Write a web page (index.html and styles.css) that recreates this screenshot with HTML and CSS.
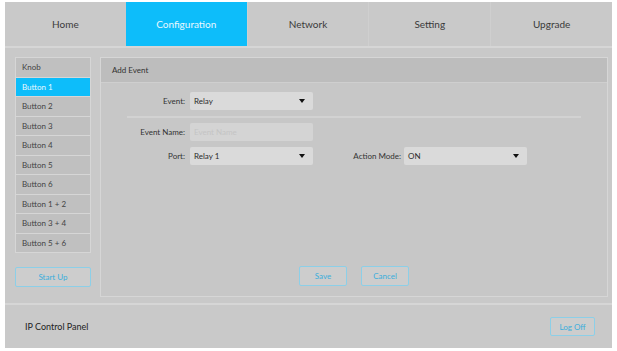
FILE: index.html
```html
<!DOCTYPE html>
<html lang="en">

<head>
    <meta charset="UTF-8">
    <title>IP Control Panel</title>
    <link rel="stylesheet" href="styles.css">
</head>

<body>
    <div class="app">
        <nav class="tabs">
            <a class="tab">Home</a>
            <a class="tab active">Configuration</a>
            <a class="tab">Network</a>
            <a class="tab">Setting</a>
            <a class="tab">Upgrade</a>
        </nav>

        <div class="content">
            <aside class="sidebar">
                <ul class="key-list">
                    <li>Knob</li>
                    <li class="selected">Button 1</li>
                    <li>Button 2</li>
                    <li>Button 3</li>
                    <li>Button 4</li>
                    <li>Button 5</li>
                    <li>Button 6</li>
                    <li>Button 1 + 2</li>
                    <li>Button 3 + 4</li>
                    <li>Button 5 + 6</li>
                </ul>
                <button type="button" class="outline-btn startup-btn">Start Up</button>
            </aside>

            <section class="panel">
                <div class="panel-title">Add Event</div>
                <div class="panel-body">
                    <div class="form-row">
                        <label class="field-label">Event:</label>
                        <div class="select-box"><span>Relay</span><i class="caret"></i></div>
                    </div>
                    <hr class="divider">
                    <div class="form-row">
                        <label class="field-label">Event Name:</label>
                        <div class="text-box">Event Name</div>
                    </div>
                    <div class="form-row">
                        <label class="field-label">Port:</label>
                        <div class="select-box"><span>Relay 1</span><i class="caret"></i></div>
                        <label class="field-label mode-label">Action Mode:</label>
                        <div class="select-box"><span>ON</span><i class="caret"></i></div>
                    </div>

                    <div class="panel-actions">
                        <button type="button" class="outline-btn">Save</button>
                        <button type="button" class="outline-btn">Cancel</button>
                    </div>
                </div>
            </section>
        </div>

        <footer class="footer">
            <span class="footer-title">IP Control Panel</span>
            <button type="button" class="outline-btn logoff-btn">Log Off</button>
        </footer>
    </div>
</body>

</html>
```

FILE: styles.css
```css
:root {
    --bg-color: #c9c9c9;
    --panel-head: #bdbdbd;
    --light-line: #d6d6d6;
    --field-color: #dadada;
    --blue-color: #0dbdfa;
    --btn-text: #3aaedc;
    --btn-border: #8ccfe8;
    --text-color: #333333;
}

body {
    margin: 0;
    background: #ffffff;
    font-family: Lato, "Open Sans", sans-serif;
    color: var(--text-color);
}

.app {
    margin: 2px 5px 0 5px;
    height: 346px;
    background: var(--bg-color);
    display: flex;
    flex-direction: column;
}

.tabs {
    display: flex;
    height: 44px;
    border-bottom: 2px solid var(--light-line);
}

.tab {
    flex: 1;
    display: flex;
    align-items: center;
    justify-content: center;
    font-size: 10px;
    color: #3a3a3a;
    border-left: 1px solid #cfcfcf;
}

.tab:first-child {
    border-left: none;
}

.tab.active {
    background: var(--blue-color);
    color: #e8f8ff;
    border-left: none;
}

.content {
    display: flex;
    gap: 9px;
    padding: 9px 4px 6px 10px;
    height: 240px;
}

.sidebar {
    width: 76px;
    display: flex;
    flex-direction: column;
}

.key-list {
    list-style: none;
    margin: 0;
    padding: 0;
    border: 1px solid var(--light-line);
    border-bottom: none;
}

.key-list li {
    box-sizing: border-box;
    height: 19.5px;
    padding-left: 6px;
    display: flex;
    align-items: center;
    font-size: 8px;
    color: #444;
    background: #c0c0c0;
    border-bottom: 1px solid var(--light-line);
}

.key-list li.selected {
    background: var(--blue-color);
    color: #e8f8ff;
}

.outline-btn {
    font-family: inherit;
    font-size: 8px;
    color: var(--btn-text);
    background: #cdcdcd;
    border: 1px solid var(--btn-border);
    border-radius: 2px;
    height: 20px;
    padding: 0;
    cursor: pointer;
}

.startup-btn {
    margin-top: 14px;
    width: 76px;
}

.panel {
    flex: 1;
    display: flex;
    flex-direction: column;
    border: 1px solid var(--light-line);
    background: #c7c7c7;
}

.panel-title {
    height: 24px;
    background: var(--panel-head);
    border-bottom: 1px solid #cfcfcf;
    display: flex;
    align-items: center;
    padding-left: 11px;
    font-size: 8px;
    color: #333;
}

.panel-body {
    flex: 1;
    display: flex;
    flex-direction: column;
    padding: 9px 0 10px 0;
}

.form-row {
    display: flex;
    align-items: center;
    height: 18px;
    margin-bottom: 6px;
}

.field-label {
    width: 84px;
    margin-right: 5px;
    text-align: right;
    font-size: 8px;
    color: #333;
}

.mode-label {
    width: 84px;
    margin-left: 4px;
    margin-right: 3px;
}

.select-box,
.text-box {
    box-sizing: border-box;
    width: 123px;
    height: 18px;
    background: var(--field-color);
    border-radius: 2px;
    display: flex;
    align-items: center;
    justify-content: space-between;
    padding: 0 8px 0 4px;
    font-size: 8px;
    color: #2a2a2a;
}

.text-box {
    color: #c4c4c4;
    background: #d4d4d4;
}

.caret {
    width: 0;
    height: 0;
    border-left: 3.5px solid transparent;
    border-right: 3.5px solid transparent;
    border-top: 4px solid #111;
}

.divider {
    border: none;
    border-top: 2px solid #d2d2d2;
    margin: 0 26px 5px 26px;
}

.panel-actions {
    margin-top: auto;
    display: flex;
    justify-content: center;
    gap: 14px;
}

.panel-actions .outline-btn {
    width: 48px;
}

.footer {
    flex: 1;
    border-top: 2px solid var(--light-line);
    display: flex;
    align-items: center;
    justify-content: space-between;
    padding: 0 17px 0 20px;
}

.footer-title {
    font-size: 9px;
    color: #222;
}

.logoff-btn {
    width: 45px;
    height: 19px;
}
```
